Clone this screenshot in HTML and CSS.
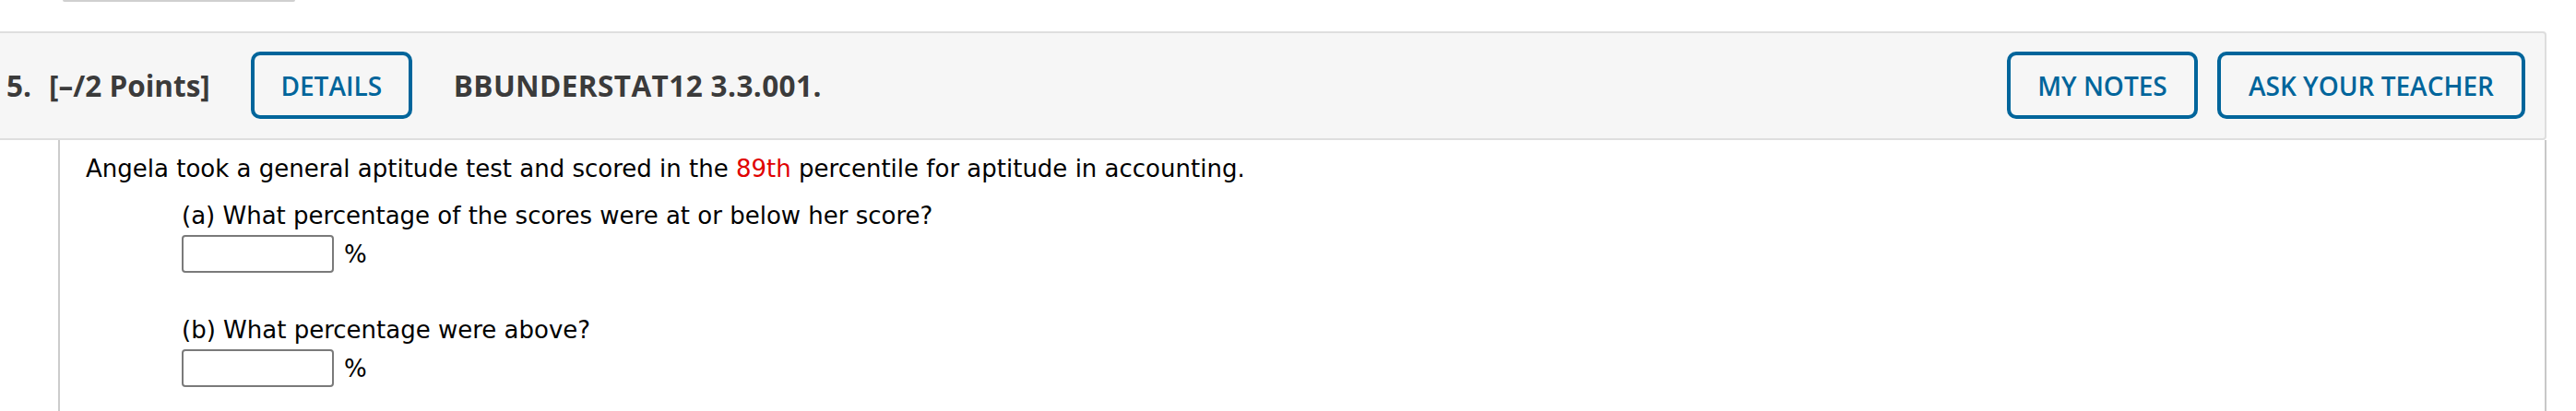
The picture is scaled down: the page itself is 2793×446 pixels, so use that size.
FILE: index.html
```html
<!DOCTYPE html>
<html lang="en">
<head>
<meta charset="utf-8">
<title>Question 5</title>
<link rel="stylesheet" href="styles.css">
</head>
<body>
<div class="top-bar"></div>
<div class="question">
  <div class="q-header">
    <span class="q-num">5.</span>
    <span class="q-points">[–/2 Points]</span>
    <button class="btn btn-details">DETAILS</button>
    <span class="q-title">BBUNDERSTAT12 3.3.001.</span>
    <span class="spacer"></span>
    <button class="btn btn-notes">MY NOTES</button>
    <button class="btn btn-ask">ASK YOUR TEACHER</button>
  </div>
  <div class="q-body">
    <p class="stem">Angela took a general aptitude test and scored in the <span class="red">89th</span> percentile for aptitude in accounting.</p>
    <div class="part">
      <p class="part-q">(a) What percentage of the scores were at or below her score?</p>
      <div class="answer-row"><input class="answer" type="text"><span class="unit">%</span></div>
    </div>
    <div class="part part-b">
      <p class="part-q">(b) What percentage were above?</p>
      <div class="answer-row"><input class="answer" type="text"><span class="unit">%</span></div>
    </div>
  </div>
</div>
</body>
</html>
```
FILE: styles.css
```css
html, body {
  margin: 0;
  padding: 0;
  background: #ffffff;
}

.top-bar {
  margin-left: 68px;
  width: 252px;
  height: 2px;
  background: #d0d0d0;
  border-radius: 0 0 2px 2px;
}

.question {
  margin-top: 32px;
  width: 2761px;
}

.q-header {
  display: flex;
  align-items: center;
  box-sizing: border-box;
  background: #f6f6f6;
  border-top: 2px solid #dedede;
  border-bottom: 2px solid #dedede;
  border-right: 2px solid #dedede;
  border-top-right-radius: 4px;
  border-bottom-right-radius: 4px;
  padding: 20px 21px 21px 7px;
  font-family: "Open Sans", "Liberation Sans", sans-serif;
  font-weight: 700;
  font-size: 31.5px;
  color: #3b3b3b;
}

.q-num {
  margin-right: 19px;
}

.q-title {
  margin-left: 45px;
  letter-spacing: 0.4px;
}

.spacer {
  flex: 1;
}

.btn {
  box-sizing: border-box;
  height: 73px;
  padding: 0;
  border: 4px solid #00659b;
  border-radius: 10px;
  background: transparent;
  color: #00659b;
  font-family: "Open Sans", "Liberation Sans", sans-serif;
  font-weight: 600;
  font-size: 28px;
  line-height: 1;
  text-align: center;
}

.btn-details {
  width: 175px;
  margin-left: 44px;
}

.btn-notes {
  width: 207px;
}

.btn-ask {
  width: 334px;
  margin-left: 21px;
}

.q-body {
  margin-left: 63px;
  border-left: 2px solid #cccccc;
  border-right: 2px solid #c8c8c8;
  padding: 16px 0 40px 28px;
  font-family: "DejaVu Sans", Verdana, sans-serif;
  font-size: 26px;
  line-height: 30px;
  color: #000000;
}

.stem {
  margin: 0;
}

.red {
  color: #e00000;
}

.part {
  margin: 21px 0 0 104px;
}

.part-b {
  margin-top: 47px;
}

.part-q {
  margin: 0;
}

.answer-row {
  display: flex;
  align-items: center;
  gap: 11px;
  margin-top: 6px;
}

.answer {
  box-sizing: border-box;
  width: 165px;
  height: 41px;
  margin: 0;
  border: 2px solid #7a7a7a;
  border-radius: 4px;
  background: #ffffff;
}
```
